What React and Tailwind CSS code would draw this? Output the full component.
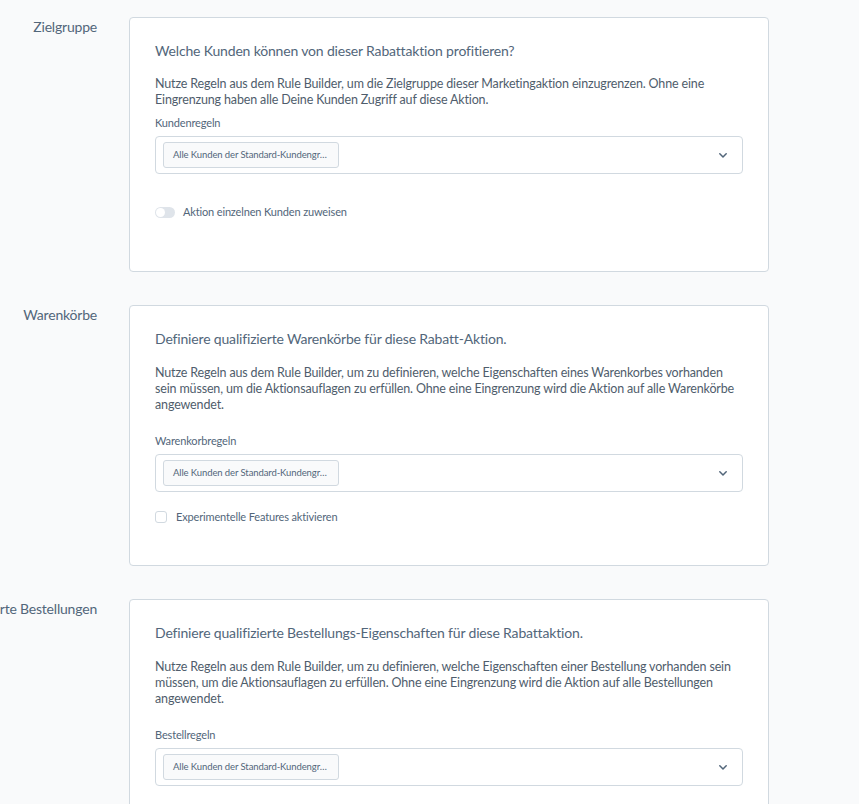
const FONT = { fontFamily: '"Source Sans Pro", Lato, "Noto Sans", sans-serif' }

const SECTIONS = [
  {
    label: 'Zielgruppe',
    title: 'Welche Kunden können von dieser Rabattaktion profitieren?',
    text: 'Nutze Regeln aus dem Rule Builder, um die Zielgruppe dieser Marketingaktion einzugrenzen. Ohne eine Eingrenzung haben alle Deine Kunden Zugriff auf diese Aktion.',
    field: 'Kundenregeln',
    kind: 'switch',
  },
  {
    label: 'Warenkörbe',
    title: 'Definiere qualifizierte Warenkörbe für diese Rabatt-Aktion.',
    text: 'Nutze Regeln aus dem Rule Builder, um zu definieren, welche Eigenschaften eines Warenkorbes vorhanden sein müssen, um die Aktionsauflagen zu erfüllen. Ohne eine Eingrenzung wird die Aktion auf alle Warenkörbe angewendet.',
    field: 'Warenkorbregeln',
    kind: 'checkbox',
  },
  {
    label: 'Qualifizierte Bestellungen',
    title: 'Definiere qualifizierte Bestellungs-Eigenschaften für diese Rabattaktion.',
    text: 'Nutze Regeln aus dem Rule Builder, um zu definieren, welche Eigenschaften einer Bestellung vorhanden sein müssen, um die Aktionsauflagen zu erfüllen. Ohne eine Eingrenzung wird die Aktion auf alle Bestellungen angewendet.',
    field: 'Bestellregeln',
    kind: 'none',
  },
]

export default function App() {
  return (
    <div className="min-h-screen overflow-hidden bg-[#f9fafb] pt-[17px]" style={FONT}>
      <div className="flex flex-col gap-[33px]">
        {SECTIONS.map((s) => (
          <Section key={s.field} s={s} />
        ))}
      </div>
    </div>
  )
}

function Section({ s }) {
  const first = s.kind === 'switch'
  return (
    <div className="flex gap-[32px]">
      <div className="flex w-[97px] shrink-0 justify-end">
        <span className="whitespace-nowrap text-[14px] leading-[20px] tracking-[-0.2px] text-[#52667a]">{s.label}</span>
      </div>

      <div className="w-[640px] shrink-0 rounded-[4px] border border-[#d1d9e0] bg-white px-[25px] pt-[23px]">
        <h3 className="text-[14px] leading-[20px] tracking-[-0.17px] text-[#52667a]">{s.title}</h3>
        <p
          className={`${first ? 'mt-[15px]' : 'mt-[16px]'} text-[12.5px] leading-[16px] tracking-[-0.15px] text-[#4f5d6c]`}
        >
          {s.text}
        </p>

        <div className={first ? 'mt-[7px]' : 'mt-[20px]'}>
          <div className="text-[11px] leading-[16px] tracking-[-0.15px] text-[#52667a]">{s.field}</div>
          <div className="mt-[5px] flex h-[38px] items-center justify-between rounded-[4px] border border-[#d1d9e0] bg-white pl-[7px] pr-[15px]">
            <span className="flex h-[26px] w-[176px] items-center overflow-hidden whitespace-nowrap rounded-[3px] border border-[#d1d9e0] bg-[#f9fafb] px-[9px] text-[9.5px] tracking-[-0.1px] text-[#52667a]">
              Alle Kunden der Standard-Kundengr…
            </span>
            <svg width="8" height="5" viewBox="0 0 8 5" fill="none">
              <polyline points="0.8,0.8 4,4 7.2,0.8" stroke="#52667a" strokeWidth="1.5" strokeLinecap="round" strokeLinejoin="round" />
            </svg>
          </div>
        </div>

        {s.kind === 'switch' && (
          <div className="mt-[30px] flex items-center gap-[8px] pb-[51px]">
            <span className="flex h-[11px] w-[20px] items-center rounded-full bg-[#dfe4ea] px-[1px]">
              <span className="h-[9px] w-[9px] rounded-full bg-white" />
            </span>
            <span className="text-[11px] leading-[16px] tracking-[-0.15px] text-[#52667a]">Aktion einzelnen Kunden zuweisen</span>
          </div>
        )}

        {s.kind === 'checkbox' && (
          <div className="mt-[17px] flex items-center gap-[9px] pb-[40px]">
            <span className="h-[12px] w-[12px] rounded-[3px] border border-[#d1d9e0] bg-white" />
            <span className="text-[11px] leading-[16px] tracking-[-0.15px] text-[#52667a]">Experimentelle Features aktivieren</span>
          </div>
        )}

        {s.kind === 'none' && <div className="h-[40px]" />}
      </div>
    </div>
  )
}
